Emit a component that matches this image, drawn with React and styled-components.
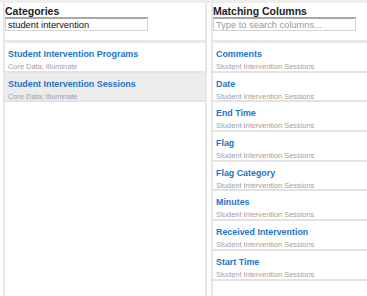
import React from "react";
import styled, { createGlobalStyle } from "styled-components";

const Global = createGlobalStyle`
  html, body { margin: 0; padding: 0; background: #fff; }
  body { font-family: "Liberation Sans", Arial, sans-serif; }
  #root { height: 100vh; }
`;

const Page = styled.div`
  display: flex;
  height: 100vh;
  box-sizing: border-box;
  border-top: 3px solid #eeeeee;
  padding-left: 3px;
  gap: 4px;
  overflow: hidden;
`;

const Panel = styled.section`
  display: flex;
  flex-direction: column;
  box-sizing: border-box;
  border-left: 2px solid #e6e6e6;
  border-right: ${(p) => (p.$last ? "none" : "2px solid #e6e6e6")};
  width: ${(p) => (p.$width ? `${p.$width}px` : "auto")};
  flex: ${(p) => (p.$width ? "none" : "1")};
  min-width: 0;
`;

const Header = styled.div`
  display: flex;
  flex-direction: column;
  height: 37px;
  box-sizing: content-box;
  border-bottom: 3px solid #e8e8e8;
`;

const Title = styled.h2`
  margin: 0;
  padding-top: 2px;
  font-size: 10.5px;
  line-height: 12px;
  font-weight: bold;
  color: #222;
`;

const Search = styled.input`
  box-sizing: border-box;
  width: ${(p) => p.$w}px;
  height: 14px;
  margin-top: 0;
  padding: 0 2px;
  border: 1px solid #d4d4d4;
  border-top: 2px solid #a8a8a8;
  font-family: "Liberation Sans", Arial, sans-serif;
  font-size: 9.3px;
  color: #111;
  outline: none;
  &::placeholder { color: #9a9a9a; }
`;

const List = styled.div`
  display: flex;
  flex-direction: column;
`;

const Row = styled.div`
  display: flex;
  flex-direction: column;
  height: 27.7px;
  padding-left: 3px;
  border-bottom: 2px solid #e2e2e2;
  background: ${(p) => (p.$selected ? "#ececec" : "transparent")};
`;

const RowTitle = styled.div`
  font-size: 8.9px;
  font-weight: bold;
  color: #2374c6;
  line-height: 10px;
  margin-top: 6px;
  white-space: nowrap;
`;

const RowSub = styled.div`
  font-size: 7.4px;
  color: #a0a0a0;
  line-height: 9px;
  margin-top: 3px;
  white-space: nowrap;
`;

const categories = [
  { title: "Student Intervention Programs", sub: "Core Data; Illuminate" },
  { title: "Student Intervention Sessions", sub: "Core Data; Illuminate", selected: true },
];

const columns = [
  "Comments",
  "Date",
  "End Time",
  "Flag",
  "Flag Category",
  "Minutes",
  "Received Intervention",
  "Start Time",
];

export default function App() {
  return (
    <>
      <Global />
      <Page>
        <Panel $width={204}>
          <Header>
            <Title>Categories</Title>
            <Search $w={143} defaultValue="student intervention" />
          </Header>
          <List>
            {categories.map((c) => (
              <Row key={c.title} $selected={c.selected}>
                <RowTitle>{c.title}</RowTitle>
                <RowSub>{c.sub}</RowSub>
              </Row>
            ))}
          </List>
        </Panel>
        <Panel $last>
          <Header>
            <Title>Matching Columns</Title>
            <Search $w={143} placeholder="Type to search columns..." />
          </Header>
          <List>
            {columns.map((c) => (
              <Row key={c}>
                <RowTitle>{c}</RowTitle>
                <RowSub>Student Intervention Sessions</RowSub>
              </Row>
            ))}
          </List>
        </Panel>
      </Page>
    </>
  );
}
